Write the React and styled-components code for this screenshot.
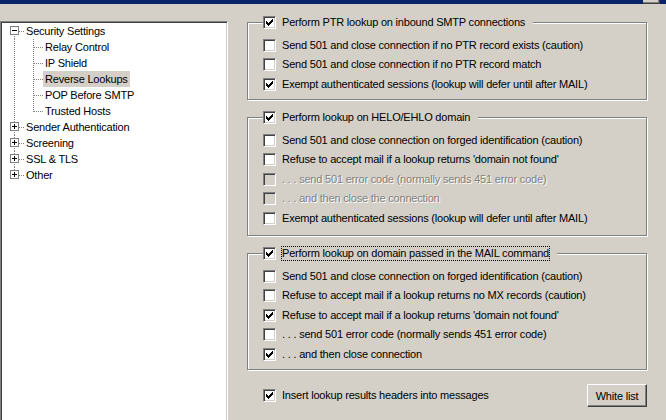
import React from "react";
import styled, { createGlobalStyle } from "styled-components";

const Global = createGlobalStyle`
  html, body { margin: 0; padding: 0; background: #d4d0c8; overflow: hidden; }
  body { font-family: "Liberation Sans", Arial, sans-serif; font-size: 11px; letter-spacing: -0.2px; color: #000; }
  * { box-sizing: border-box; }
`;

const Window = styled.div`
  width: 666px;
  height: 420px;
  background: #d4d0c8;
  display: flex;
  flex-direction: column;
  overflow: hidden;
`;

const TitleBar = styled.div`
  flex: none;
  height: 4px;
  background: #0a246a;
  display: flex;
  justify-content: flex-end;
  align-items: flex-start;
  overflow: hidden;
  padding: 0 6px 0 21px;
`;

const TitleButton = styled.div`
  width: 17px;
  height: 4px;
  background: #d4d0c8;
  border-right: 1px solid #404040;
  border-bottom: 1px solid #404040;
  box-shadow: inset -1px -1px 0 #808080;
`;

const Main = styled.div`
  flex: 1;
  min-height: 0;
  display: flex;
  align-items: flex-start;
`;

const TreePanel = styled.div`
  flex: none;
  margin-top: 17px;
  width: 228px;
  height: 410px;
  background: #fff;
  border-top: 1px solid #808080;
  border-left: 1px solid #808080;
  border-right: 1px solid #fff;
  border-bottom: 1px solid #fff;
  box-shadow: inset 1px 1px 0 #404040, inset -1px -1px 0 #d4d0c8;
  padding: 1px 0 0 1px;
  display: flex;
  flex-direction: column;
`;

const TreeRow = styled.div`
  flex: none;
  height: 16px;
  display: flex;
  align-items: stretch;
`;

const Gutter = styled.svg`
  display: block;
  flex: none;
`;

const TreeLabel = styled.span`
  line-height: 16px;
  padding: 0 2px;
  white-space: nowrap;
  background: ${(p) => (p.$selected ? "#d4d0c8" : "transparent")};
`;

const Dot = "#808080";

function Expander({ open, first, last }) {
  return (
    <Gutter width="22" height="16" viewBox="0 0 22 16" shapeRendering="crispEdges">
      {!first && <line x1="12.5" y1="0" x2="12.5" y2="4" stroke={Dot} strokeDasharray="1 1" />}
      {!last && <line x1="12.5" y1="13" x2="12.5" y2="16" stroke={Dot} strokeDasharray="1 1" />}
      <line x1="17" y1="8.5" x2="22" y2="8.5" stroke={Dot} strokeDasharray="1 1" />
      <rect x="8.5" y="3.5" width="8" height="8" fill="#fff" stroke={Dot} />
      <rect x="10" y="7" width="5" height="1" fill="#000" />
      {!open && <rect x="12" y="5" width="1" height="5" fill="#000" />}
    </Gutter>
  );
}

function ChildLines({ last }) {
  return (
    <Gutter width="41" height="16" viewBox="0 0 41 16" shapeRendering="crispEdges">
      <line x1="12.5" y1="0" x2="12.5" y2="16" stroke={Dot} strokeDasharray="1 1" />
      <line x1="31.5" y1="0" x2="31.5" y2={last ? 9 : 16} stroke={Dot} strokeDasharray="1 1" />
      <line x1="32" y1="8.5" x2="41" y2="8.5" stroke={Dot} strokeDasharray="1 1" />
    </Gutter>
  );
}

const Options = styled.div`
  flex: none;
  margin-left: 19px;
  width: 400px;
  padding-top: 12px;
  display: flex;
  flex-direction: column;
  gap: 11px;
`;

const Group = styled.fieldset`
  margin: 0;
  padding: 0;
  min-width: 0;
  border: 1px solid #808080;
  box-shadow: inset 1px 1px 0 #fff, 1px 1px 0 #fff;
`;

const Legend = styled.legend`
  margin-left: 15px;
  padding: 0 8px 0 0;
  height: 13px;
  background: #d4d0c8;
  display: flex;
  align-items: center;
  gap: 6px;
`;

const GroupBody = styled.div`
  padding: 6.5px 0 ${(p) => p.$pb}px 15px;
  display: flex;
  flex-direction: column;
`;

const Row = styled.div`
  height: 19.5px;
  display: flex;
  align-items: center;
  gap: 6px;
`;

const Label = styled.span`
  white-space: nowrap;
  line-height: 13px;
  color: ${(p) => (p.$disabled ? "#808080" : "#000")};
  text-shadow: ${(p) => (p.$disabled ? "1px 1px 0 #fff" : "none")};
  outline: ${(p) => (p.$focused ? "1px dotted #000" : "none")};
  outline-offset: 0px;
`;

const Box = styled.span`
  flex: none;
  width: 13px;
  height: 13px;
  display: block;
  border-top: 1px solid #808080;
  border-left: 1px solid #808080;
  border-right: 1px solid #fff;
  border-bottom: 1px solid #fff;
  background: ${(p) => (p.$disabled ? "#d4d0c8" : "#fff")};
  box-shadow: inset 1px 1px 0 #404040, inset -1px -1px 0 #d4d0c8;
`;

const CheckSvg = styled.svg`
  display: block;
`;

const checkTops = [5, 6, 7, 6, 5, 4, 3];

function CheckBox({ checked, disabled }) {
  return (
    <Box $disabled={disabled}>
      {checked && (
        <CheckSvg width="11" height="11" viewBox="0 0 11 11" shapeRendering="crispEdges">
          {checkTops.map((t, i) => (
            <rect key={i} x={2 + i} y={t - 1} width="1" height="3" fill={disabled ? "#808080" : "#000"} />
          ))}
        </CheckSvg>
      )}
    </Box>
  );
}

function Option({ checked, disabled, children }) {
  return (
    <Row>
      <CheckBox checked={checked} disabled={disabled} />
      <Label $disabled={disabled}>{children}</Label>
    </Row>
  );
}

const BottomRow = styled.div`
  margin-top: 3px;
  height: 23px;
  padding-left: 16px;
  display: flex;
  align-items: center;
  justify-content: space-between;
`;

const Check = styled.div`
  display: flex;
  align-items: center;
  gap: 6px;
`;

const Button = styled.button`
  width: 60px;
  height: 23px;
  padding: 0;
  font: inherit;
  letter-spacing: inherit;
  color: #000;
  background: #d4d0c8;
  border-top: 1px solid #fff;
  border-left: 1px solid #fff;
  border-right: 1px solid #404040;
  border-bottom: 1px solid #404040;
  box-shadow: inset -1px -1px 0 #808080;
`;

const groups = [
  {
    title: "Perform PTR lookup on inbound SMTP connections",
    checked: true,
    pb: 5,
    items: [
      ["Send 501 and close connection if no PTR record exists (caution)", false, false],
      ["Send 501 and close connection if no PTR record match", false, false],
      ["Exempt authenticated sessions (lookup will defer until after MAIL)", true, false],
    ],
  },
  {
    title: "Perform lookup on HELO/EHLO domain",
    checked: true,
    pb: 7,
    items: [
      ["Send 501 and close connection on forged identification (caution)", false, false],
      ["Refuse to accept mail if a lookup returns 'domain not found'", false, false],
      [". . . send 501 error code (normally sends 451 error code)", false, true],
      [". . . and then close the connection", false, true],
      ["Exempt authenticated sessions (lookup will defer until after MAIL)", false, false],
    ],
  },
  {
    title: "Perform lookup on domain passed in the MAIL command",
    checked: true,
    focused: true,
    pb: 5,
    items: [
      ["Send 501 and close connection on forged identification (caution)", false, false],
      ["Refuse to accept mail if a lookup returns no MX records (caution)", false, false],
      ["Refuse to accept mail if a lookup returns 'domain not found'", true, false],
      [". . . send 501 error code (normally sends 451 error code)", false, false],
      [". . . and then close connection", true, false],
    ],
  },
];

const children = ["Relay Control", "IP Shield", "Reverse Lookups", "POP Before SMTP", "Trusted Hosts"];
const others = ["Sender Authentication", "Screening", "SSL & TLS", "Other"];

export default function App() {
  return (
    <Window>
      <Global />
      <TitleBar>
        <TitleButton />
      </TitleBar>
      <Main>
        <TreePanel>
          <TreeRow>
            <Expander open first />
            <TreeLabel>Security Settings</TreeLabel>
          </TreeRow>
          {children.map((c, i) => (
            <TreeRow key={c}>
              <ChildLines last={i === children.length - 1} />
              <TreeLabel $selected={c === "Reverse Lookups"}>{c}</TreeLabel>
            </TreeRow>
          ))}
          {others.map((c, i) => (
            <TreeRow key={c}>
              <Expander last={i === others.length - 1} />
              <TreeLabel>{c}</TreeLabel>
            </TreeRow>
          ))}
        </TreePanel>
        <Options>
          {groups.map((g) => (
            <Group key={g.title}>
              <Legend>
                <CheckBox checked={g.checked} />
                <Label $focused={g.focused}>{g.title}</Label>
              </Legend>
              <GroupBody $pb={g.pb}>
                {g.items.map(([t, c, d], i) => (
                  <Option key={i} checked={c} disabled={d}>
                    {t}
                  </Option>
                ))}
              </GroupBody>
            </Group>
          ))}
          <BottomRow>
            <Check>
              <CheckBox checked />
              <Label>Insert lookup results headers into messages</Label>
            </Check>
            <Button>White list</Button>
          </BottomRow>
        </Options>
      </Main>
    </Window>
  );
}
